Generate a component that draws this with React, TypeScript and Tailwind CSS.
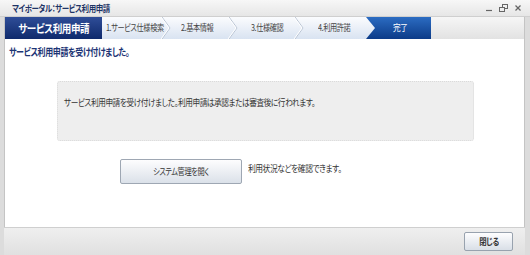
import React from 'react';

const jp = "font-['Noto_Sans_CJK_JP','Noto_Sans',sans-serif] [font-feature-settings:'palt']";

// narrow text: the reference uses a condensed Japanese UI font
function Narrow({ className, children }: { className: string; children: React.ReactNode }) {
  return <span className={`inline-block whitespace-nowrap tracking-[-0.5px] ${className}`}>{children}</span>;
}

function Chevron() {
  return (
    <svg width="10" height="22" viewBox="0 0 10 22" className="shrink-0">
      <polyline points="1,0 9,11 1,22" fill="none" stroke="#b9c4d3" strokeWidth="1" />
      <polyline points="0,0 8,11 0,22" fill="none" stroke="#ffffff" strokeWidth="1" />
    </svg>
  );
}

const steps = [
  { label: '1.サービス仕様検索', cls: 'w-[59px] pl-[4px]' },
  { label: '2.基本情報', cls: 'w-[57px] pl-[10px]' },
  { label: '3.仕様確認', cls: 'w-[56px] pl-[13px]' },
  { label: '4.利用許諾', cls: 'w-[62px] pl-[14px]' },
];

export default function App() {
  return (
    <div className={`w-[530px] h-[255px] flex flex-col bg-[#dcdcdc] text-[#333] ${jp}`}>
      {/* Title bar */}
      <div className="h-[17px] flex items-center justify-between pl-3 pr-2 bg-gradient-to-b from-[#f7f7f7] to-[#e6e6e6] border-b border-[#cfcfcf]">
        <Narrow className="origin-left scale-x-[0.83] text-[9px] font-bold text-[#1e3466] leading-none">マイポータル：サービス利用申請</Narrow>
        <div className="flex items-center gap-[6px] leading-none">
          <svg width="8" height="8" viewBox="0 0 8 8"><line x1="1" y1="6.5" x2="7" y2="6.5" stroke="#666" strokeWidth="1.2" /></svg>
          <svg width="9" height="8" viewBox="0 0 9 8" fill="none" stroke="#666" strokeWidth="1">
            <rect x="3.5" y="0.5" width="5" height="4" />
            <rect x="0.5" y="3.5" width="5" height="4" fill="#eee" />
          </svg>
          <svg width="8" height="8" viewBox="0 0 8 8" stroke="#666" strokeWidth="1.3"><line x1="1.5" y1="1.5" x2="6.5" y2="6.5" /><line x1="6.5" y1="1.5" x2="1.5" y2="6.5" /></svg>
        </div>
      </div>

      {/* Body */}
      <div className="flex-1 flex flex-col bg-white ml-[4px] mr-[5px] border-x border-[#c4c4c4]">
        {/* Step bar */}
        <div className="h-[22px] flex items-stretch bg-gradient-to-b from-[#f6f6f6] to-[#e2e2e2]">
          <div className="w-[97px] flex items-center justify-center bg-gradient-to-b from-[#2f4d98] to-[#0f2a6c] text-white">
            <Narrow className="origin-center scale-x-[0.87] text-[11px] font-bold">サービス利用申請</Narrow>
          </div>
          <div className="flex items-stretch bg-gradient-to-b from-[#fbfcfe] to-[#d9e3f1] text-[#444]">
            {steps.map((s, i) => (
              <div key={i} className="flex items-stretch">
                <div className={`${s.cls} flex items-center`}>
                  <Narrow className="origin-left scale-x-[0.8] text-[9px]">{s.label}</Narrow>
                </div>
                {i < steps.length - 1 && <Chevron />}
              </div>
            ))}
          </div>
          <div className="relative w-[65px] flex items-center justify-center bg-gradient-to-b from-[#2c6cc2] to-[#0c3b88] text-white">
            <svg width="10" height="22" viewBox="0 0 10 22" className="absolute left-0 top-0">
              <defs>
                <linearGradient id="sg" x1="0" y1="0" x2="0" y2="1">
                  <stop offset="0" stopColor="#fbfcfe" />
                  <stop offset="1" stopColor="#d9e3f1" />
                </linearGradient>
              </defs>
              <polygon points="0,0 9,11 0,22" fill="url(#sg)" />
            </svg>
            <Narrow className="origin-center scale-x-[0.85] text-[9px] pl-[4px]">完了</Narrow>
          </div>
        </div>

        <div className="pl-[4px] pt-[3px] leading-[14px]">
          <Narrow className="origin-left scale-x-[0.8] text-[10px] font-bold text-[#1c3474]">サービス利用申請を受け付けました。</Narrow>
        </div>

        {/* Info box */}
        <div className="mt-[22px] ml-[52px] w-[417px] h-[60px] bg-[#eeeeee] rounded-[3px] border border-dotted border-[#dadada] px-[6px] pt-[10px] leading-[14px] text-[#333]">
          <Narrow className="origin-left scale-x-[0.85] text-[9px]">サービス利用申請を受け付けました。利用申請は承認または審査後に行われます。</Narrow>
        </div>

        {/* Button row */}
        <div className="mt-[18px] ml-[115px] flex items-start gap-[6px]">
          <button className="w-[122px] h-[25px] flex items-center justify-center rounded-[2px] border border-[#9ea7b3] bg-gradient-to-b from-[#fdfdfe] to-[#dbe1e9] text-[#333]">
            <Narrow className="origin-center scale-x-[0.8] text-[9px]">システム管理を開く</Narrow>
          </button>
          <div className="leading-[12px] text-[#333]">
            <Narrow className="origin-left scale-x-[0.86] text-[9px]">利用状況などを確認できます。</Narrow>
          </div>
        </div>
      </div>

      {/* Footer */}
      <div className="h-[28px] flex items-start justify-end pr-[12px] pt-[4px] ml-[4px] mr-[5px] border-t border-[#cfcfcf] bg-gradient-to-b from-[#efefef] to-[#e0e0e0]">
        <button className="w-[49px] h-[19px] flex items-center justify-center rounded-[2px] border border-[#98a2ae] bg-gradient-to-b from-[#fdfdfe] to-[#d9dfe7] text-[#333]">
          <Narrow className="origin-center scale-x-[0.82] text-[9px] font-bold">閉じる</Narrow>
        </button>
      </div>
    </div>
  );
}
